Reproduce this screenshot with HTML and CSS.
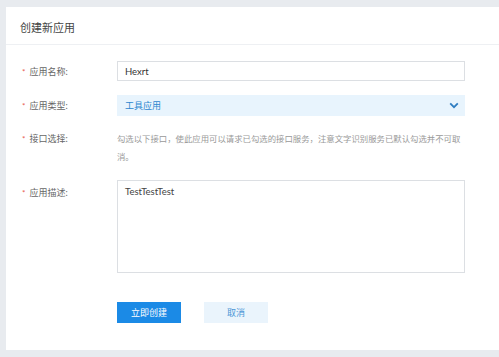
FILE: index.html
```html
<!DOCTYPE html>
<html lang="zh">
<head>
<meta charset="utf-8">
<title>创建新应用</title>
<link rel="stylesheet" href="styles.css">
</head>
<body>
<div class="card">
  <div class="card-header">创建新应用</div>
  <div class="form">
    <div class="row center">
      <div class="label"><span class="req">*</span>应用名称:</div>
      <div class="input">Hexrt</div>
    </div>
    <div class="row center">
      <div class="label"><span class="req">*</span>应用类型:</div>
      <div class="select">
        <span>工具应用</span>
        <svg class="chev" width="10" height="7" viewBox="0 0 10 7"><path d="M1.2 1.4 L5 5.2 L8.8 1.4" fill="none" stroke="#2f7dc1" stroke-width="1.8"/></svg>
      </div>
    </div>
    <div class="row">
      <div class="label lh18"><span class="req">*</span>接口选择:</div>
      <div class="help">勾选以下接口，使此应用可以请求已勾选的接口服务，注意文字识别服务已默认勾选并不可取消。</div>
    </div>
    <div class="row">
      <div class="label ta-label"><span class="req">*</span>应用描述:</div>
      <div class="textarea">TestTestTest</div>
    </div>
    <div class="actions">
      <div class="btn primary">立即创建</div>
      <div class="btn ghost">取消</div>
    </div>
  </div>
</div>
</body>
</html>
```
FILE: styles.css
```css
html, body {
  margin: 0;
  padding: 0;
}
body {
  background: #e8ebef;
  font-family: Lato, "Noto Sans CJK SC", sans-serif;
  width: 499px;
  height: 357px;
  overflow: hidden;
}
.card {
  background: #fff;
  margin: 7px 0 0 6px;
  height: 343px;
  box-sizing: border-box;
}
.card-header {
  height: 38px;
  box-sizing: border-box;
  border-bottom: 1px solid #eef0f3;
  padding-left: 14px;
  font-size: 11px;
  color: #444;
  display: flex;
  align-items: center;
  padding-top: 2px;
}
.form {
  padding: 16px 0 0 14px;
  display: flex;
  flex-direction: column;
  gap: 14px;
}
.row {
  display: grid;
  grid-template-columns: 97px 348px;
  align-items: start;
}
.row.center {
  align-items: center;
}
.label {
  font-size: 9px;
  color: #666;
  padding-left: 2px;
}
.req {
  color: #e8574f;
  margin-right: 4px;
  font-size: 8px;
}
.lh18 {
  line-height: 18px;
}
.ta-label {
  padding-top: 6px;
}
.input {
  height: 20px;
  box-sizing: border-box;
  border: 1px solid #dcdfe3;
  font-size: 9.5px;
  color: #333;
  padding-left: 7px;
  display: flex;
  align-items: center;
}
.select {
  height: 21px;
  box-sizing: border-box;
  background: #e8f4fd;
  font-size: 9px;
  color: #2e86cf;
  padding: 0 6px 0 8px;
  display: flex;
  align-items: center;
  justify-content: space-between;
}
.help {
  font-size: 8.4px;
  line-height: 18px;
  color: #999;
}
.textarea {
  height: 93px;
  box-sizing: border-box;
  border: 1px solid #dcdfe3;
  font-size: 9.5px;
  color: #444;
  padding: 5px 7px;
}
.actions {
  display: flex;
  gap: 23px;
  padding-left: 97px;
  margin-top: 15px;
}
.btn {
  width: 64px;
  height: 21px;
  display: flex;
  align-items: center;
  justify-content: center;
  font-size: 9px;
}
.primary {
  background: #1b8ae6;
  color: #fff;
}
.ghost {
  background: #eaf4fc;
  color: #4b96d6;
}
```
